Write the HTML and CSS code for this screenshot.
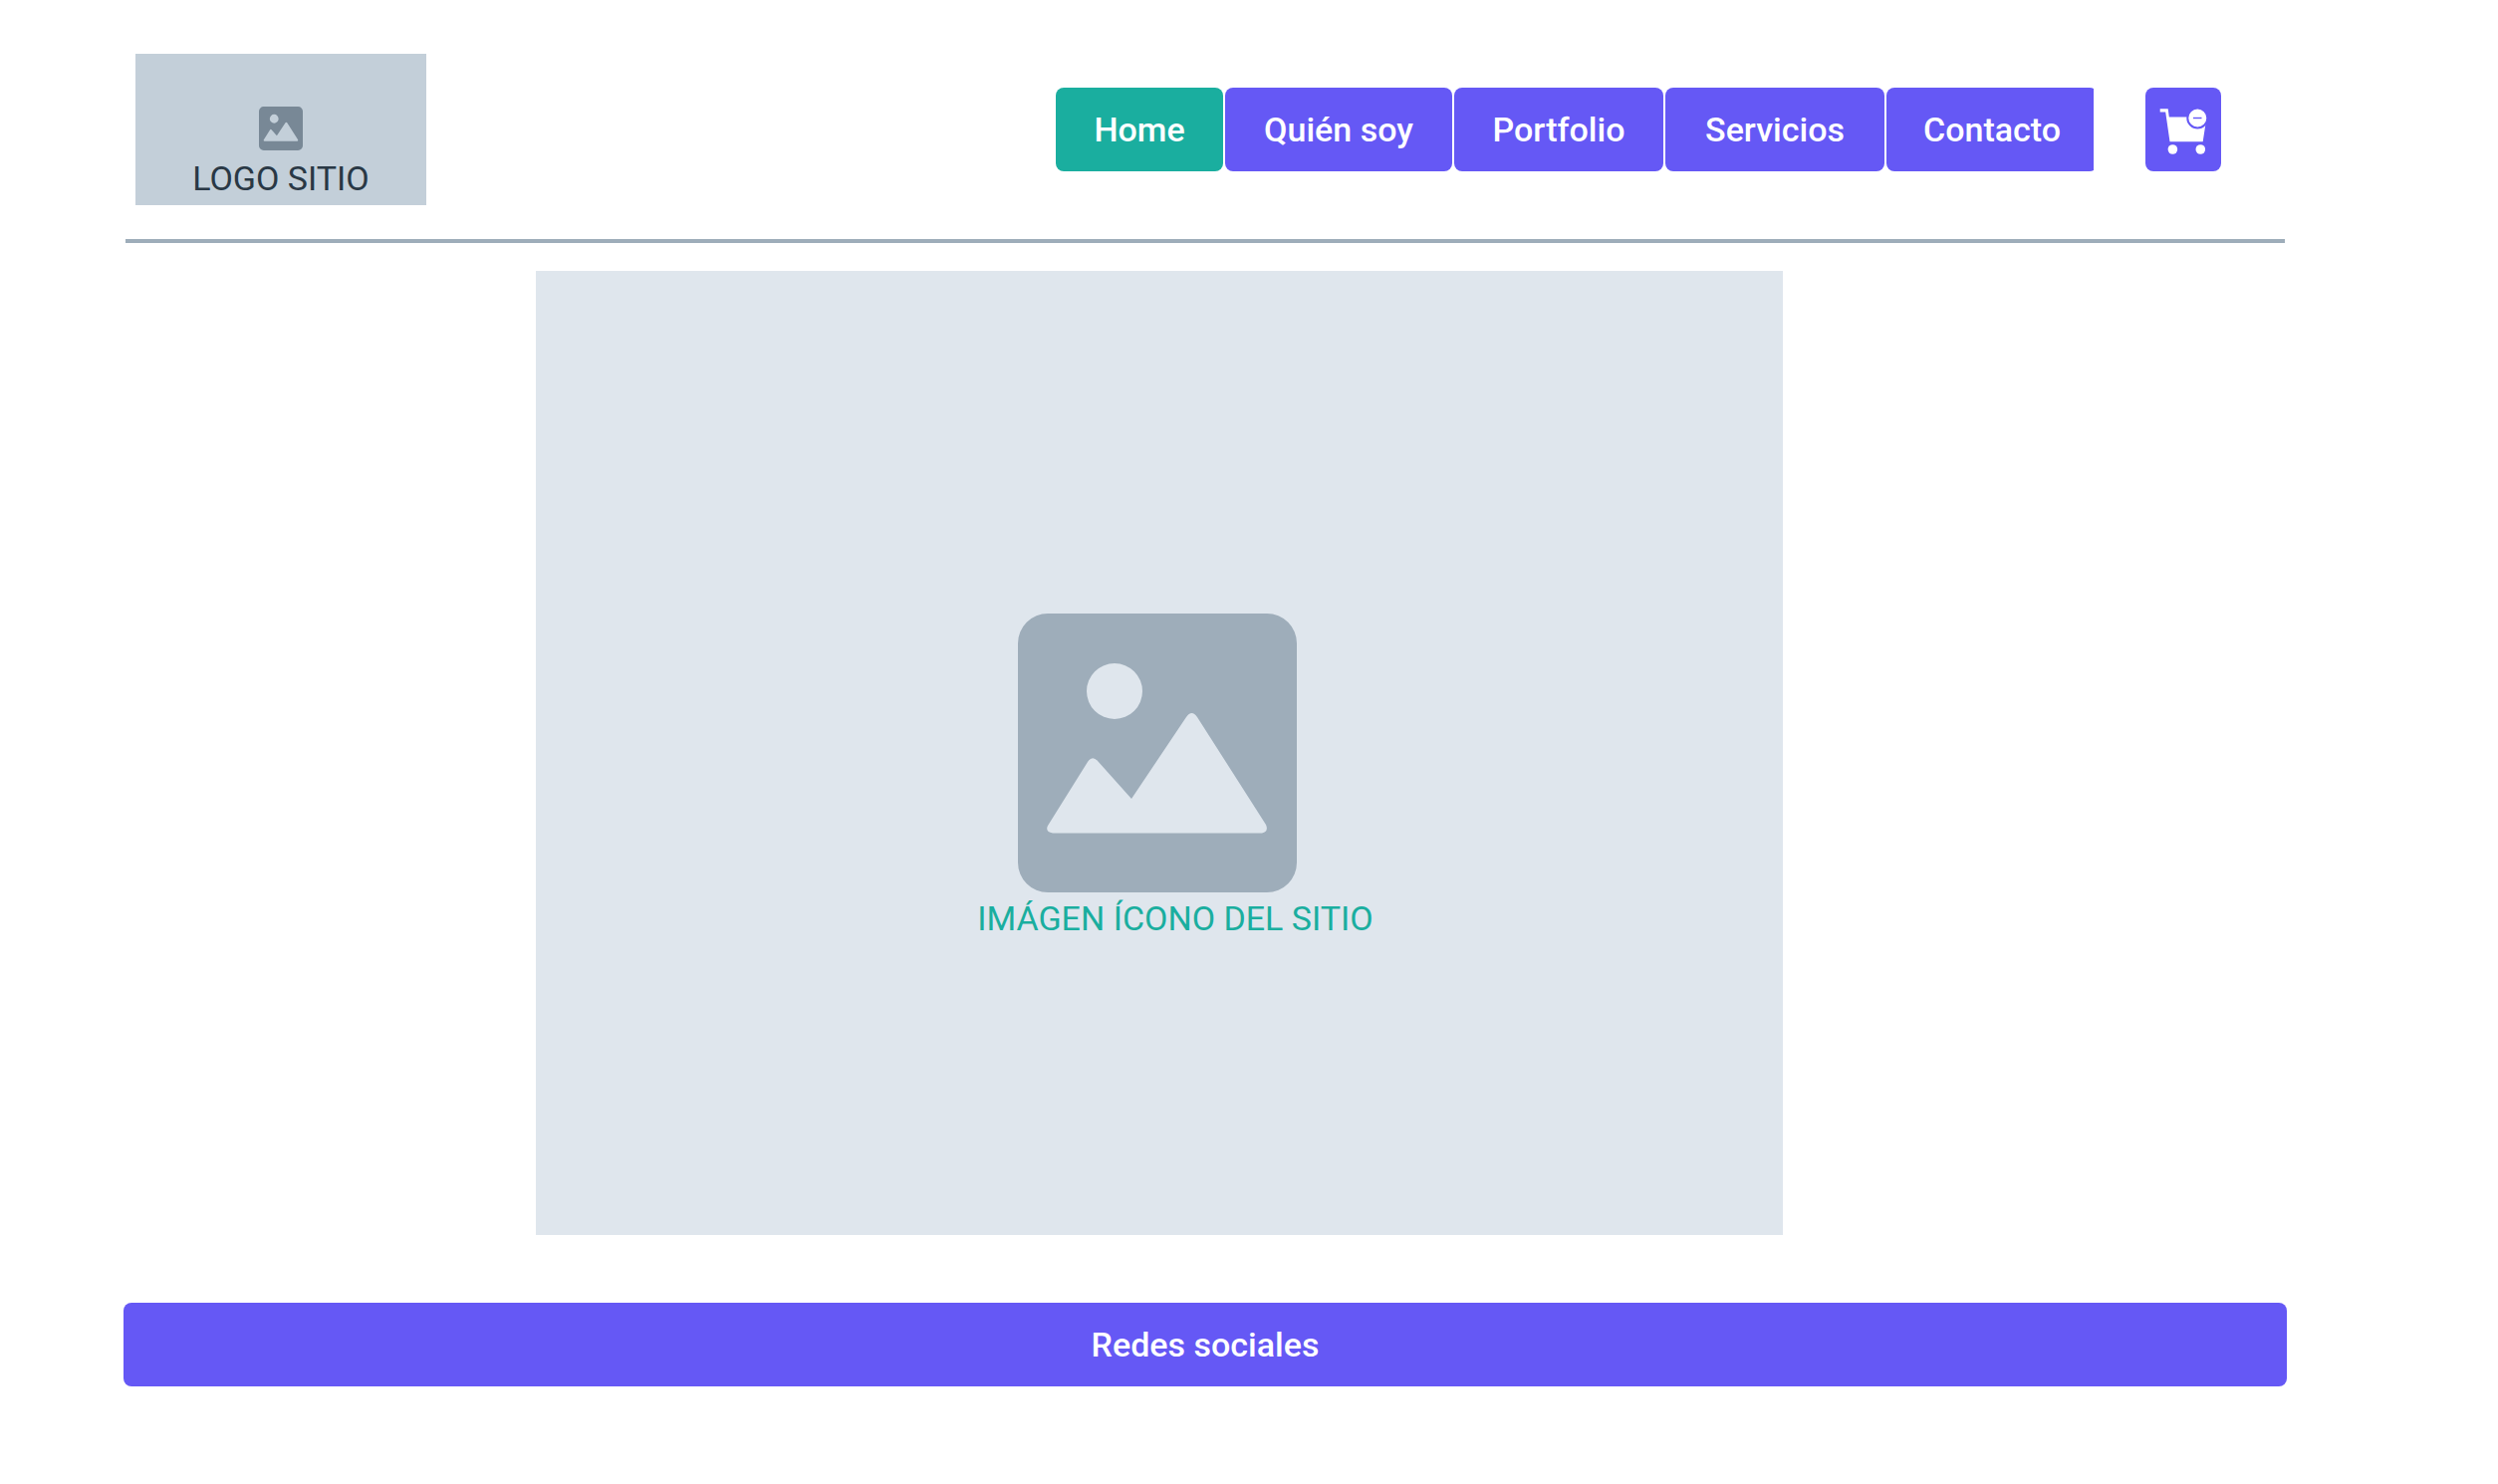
FILE: index.html
```html
<!DOCTYPE html>
<html lang="es">
<head>
<meta charset="utf-8">
<title>Home</title>
<link rel="stylesheet" href="styles.css">
</head>
<body>
<svg width="0" height="0" class="sprite" aria-hidden="true">
  <symbol id="picture" viewBox="0 0 280 280">
    <path fill-rule="evenodd" d="M30 0H250A30 30 0 0 1 280 30V250A30 30 0 0 1 250 280H30A30 30 0 0 1 0 250V30A30 30 0 0 1 30 0ZM97 50A28 28 0 1 0 97 106A28 28 0 1 0 97 50ZM30 213L70 149Q74.500 142 80 148L114 186L169 104Q174.500 96 180 104L249 212Q252 219 245 220.500H35Q27 219 30 213Z"/>
  </symbol>
</svg>
<div class="page">
  <header class="header">
    <a class="logo" href="#">
      <svg class="logo-icon" aria-hidden="true"><use href="#picture"/></svg>
      <span>LOGO SITIO</span>
    </a>
    <div class="actions">
      <nav class="nav">
        <a class="button active" href="#">Home</a>
        <a class="button" href="#">Quién soy</a>
        <a class="button" href="#">Portfolio</a>
        <a class="button" href="#">Servicios</a>
        <a class="button" href="#">Contacto</a>
      </nav>
      <button class="button cart" type="button" aria-label="Carrito">
        <svg width="76" height="84" viewBox="0 0 76 84" aria-hidden="true">
          <path fill="#fff" d="M14.700 21.300H22.700L23.800 29.500H61.500L57.700 54.300H24.500L20.200 24.500H14.700Z"/>
          <circle cx="27.400" cy="62" r="4.800" fill="#fff"/>
          <circle cx="55.300" cy="62" r="4.800" fill="#fff"/>
          <circle cx="52.300" cy="30.500" r="10" fill="#fff" stroke="#6558f5" stroke-width="2"/>
          <path d="M48 30.500H56.500" stroke="#6558f5" stroke-width="1.400"/>
        </svg>
      </button>
    </div>
  </header>
  <main>
    <figure class="hero">
      <svg class="hero-icon" aria-hidden="true"><use href="#picture"/></svg>
      <figcaption>IMÁGEN ÍCONO DEL SITIO</figcaption>
    </figure>
  </main>
  <footer>
    <a class="button" href="#">Redes sociales</a>
  </footer>
</div>
</body>
</html>
```
FILE: styles.css
```css
* { box-sizing: border-box; }

body {
  margin: 0;
  background: #fff;
  font: 34px/40px Roboto, "Liberation Sans", sans-serif;
}

.sprite { position: absolute; }

.page { padding: 54px 212px 98px 124px; }

.header {
  display: flex;
  align-items: center;
  justify-content: space-between;
  margin: 0 2px;
  padding: 0 64px 34px 10px;
  border-bottom: 4px solid #9eadba;
}

.logo {
  display: flex;
  flex-direction: column;
  align-items: center;
  gap: 8px;
  width: 292px;
  height: 152px;
  padding-top: 53px;
  background: #c3cfd9;
  color: #293845;
  text-decoration: none;
}

.logo-icon {
  width: 44px;
  height: 44px;
  fill: #788896;
}

.actions {
  display: flex;
  gap: 52px;
}

.nav {
  display: grid;
  grid-template-columns: 168px 228px 210px 220px 212px;
  gap: 2px;
  width: 1042px;
  overflow: hidden;
}

.button {
  display: flex;
  align-items: center;
  justify-content: center;
  height: 84px;
  border: 0;
  border-radius: 8px;
  background: #6558f5;
  color: #fff;
  font-weight: 500;
  text-decoration: none;
}

.button.active { background: #1aae9f; }

.cart {
  width: 76px;
  padding: 0;
}

.hero {
  display: grid;
  grid-template-rows: 1fr auto 1fr;
  justify-items: center;
  margin: 28px 506px 68px 414px;
  aspect-ratio: 1252 / 968;
  background: #dfe6ed;
  color: #1aae9f;
}

.hero-icon {
  grid-row: 2;
  width: 280px;
  height: 280px;
  margin-right: 4px;
  fill: #9eadba;
}

.hero figcaption {
  grid-row: 3;
  padding: 6px 0 0 32px;
}
```
